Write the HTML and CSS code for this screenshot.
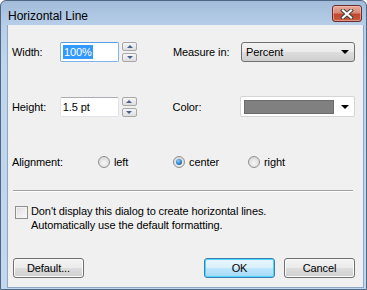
FILE: index.html
```html
<!DOCTYPE html>
<html>
<head>
<meta charset="utf-8">
<link rel="stylesheet" href="styles.css">
</head>
<body>
<div class="window">
  <div class="titlebar">
    <span class="title">Horizontal Line</span>
    <div class="close">
      <svg width="14" height="10" viewBox="0 0 14 10">
        <path d="M3 1.5 L11 8.5 M11 1.5 L3 8.5" stroke="#3a3a3a" stroke-width="4" stroke-linecap="square" fill="none"/>
        <path d="M3 1.5 L11 8.5 M11 1.5 L3 8.5" stroke="#ffffff" stroke-width="2.2" stroke-linecap="square" fill="none"/>
      </svg>
    </div>
  </div>
  <div class="client">
    <div class="row row1">
      <span class="lbl">Width:</span>
      <div class="textbox focused"><span class="sel">100%</span></div>
      <div class="spin">
        <div class="spinbtn"><span class="tri up"></span></div>
        <div class="spinbtn"><span class="tri down"></span></div>
      </div>
      <span class="lbl2">Measure in:</span>
      <div class="select"><span>Percent</span><span class="arrow"></span></div>
    </div>
    <div class="row row2">
      <span class="lbl">Height:</span>
      <div class="textbox"><span>1.5 pt</span></div>
      <div class="spin">
        <div class="spinbtn"><span class="tri up"></span></div>
        <div class="spinbtn"><span class="tri down"></span></div>
      </div>
      <span class="lbl2">Color:</span>
      <div class="colorbox"><span class="swatch"></span><span class="arrow"></span></div>
    </div>
    <div class="row row3">
      <span class="lbl wide">Alignment:</span>
      <div class="radiogrp"><span class="radio"></span><span>left</span></div>
      <div class="radiogrp"><span class="radio checked"></span><span>center</span></div>
      <div class="radiogrp"><span class="radio"></span><span>right</span></div>
    </div>
    <div class="separator"></div>
    <div class="checkrow">
      <span class="checkbox"></span>
      <span class="checktext">Don't display this dialog to create horizontal lines.<br>Automatically use the default formatting.</span>
    </div>
    <div class="buttons">
      <div class="btn">Default...</div>
      <div class="btn default push">OK</div>
      <div class="btn">Cancel</div>
    </div>
  </div>
</div>
</body>
</html>
```

FILE: styles.css
```css
html, body {
  margin: 0;
  padding: 0;
}
body {
  width: 367px;
  height: 290px;
  overflow: hidden;
  font-family: "Liberation Sans", Arial, sans-serif;
  font-size: 11px;
  letter-spacing: -0.1px;
  color: #000;
  background: #fff;
}
.window {
  box-sizing: border-box;
  width: 367px;
  height: 290px;
  border: 1px solid #4f6684;
  border-radius: 6px 6px 0 0;
  background: linear-gradient(to bottom, #a2bcd9 0px, #b6cee8 24px, #bfd5ec 60px, #c3d8ee 100%);
  display: flex;
  flex-direction: column;
}
.titlebar {
  height: 24px;
  display: flex;
  align-items: flex-start;
  padding: 0 4px 0 7px;
}
.title {
  font-size: 12px;
  letter-spacing: 0;
  line-height: 12px;
  margin-top: 9px;
  color: #000;
}
.close {
  margin-left: auto;
  margin-top: 4px;
  box-sizing: border-box;
  width: 30px;
  height: 17px;
  border: 1px solid #6b2b2b;
  border-radius: 3px;
  background: linear-gradient(to bottom, #e8a899 0%, #d98a78 45%, #c2472f 55%, #c85c40 100%);
  box-shadow: inset 0 0 0 1px rgba(255, 210, 200, 0.5);
  display: flex;
  align-items: center;
  justify-content: center;
}
.client {
  flex: 1;
  margin: 0 2px 1px 6px;
  border: 1px solid #8da7c5;
  border-top: none;
  background: #f0f0f0;
  padding: 16px 8px 0 4px;
}
.row {
  display: flex;
  align-items: center;
  height: 21px;
}
.row2 {
  margin-top: 34px;
}
.row3 {
  margin-top: 35px;
  height: 20px;
}
.lbl {
  width: 48px;
}
.lbl.wide {
  width: 86px;
}
.lbl2 {
  width: 68px;
  margin-left: 36px;
}
.textbox {
  box-sizing: border-box;
  width: 59px;
  height: 20px;
  background: #fff;
  border: 1px solid #e2e3ea;
  border-top-color: #abadb3;
  border-radius: 2px;
  display: flex;
  align-items: center;
  padding-left: 2px;
}
.textbox.focused {
  border-color: #7eb4ea;
  border-top-color: #569de5;
}
.sel {
  background: #3399ff;
  color: #fff;
  line-height: 14px;
  padding: 0 1px;
}
.spin {
  margin-left: 3px;
  width: 15px;
  display: flex;
  flex-direction: column;
  gap: 2px;
}
.spinbtn {
  box-sizing: border-box;
  height: 9px;
  border: 1px solid #a8a8a8;
  border-radius: 2px;
  background: linear-gradient(to bottom, #f6f6f6, #dedede);
  display: flex;
  align-items: center;
  justify-content: center;
}
.tri {
  width: 0;
  height: 0;
  border-left: 3px solid transparent;
  border-right: 3px solid transparent;
}
.tri.up {
  border-bottom: 3px solid #4b5f8e;
}
.tri.down {
  border-top: 3px solid #4b5f8e;
}
.select {
  box-sizing: border-box;
  width: 114px;
  height: 20px;
  border: 1px solid #707070;
  border-radius: 3px;
  background: linear-gradient(to bottom, #f2f2f2 0%, #ebebeb 50%, #dddddd 51%, #cfcfcf 100%);
  display: flex;
  align-items: center;
  padding-left: 4px;
  padding-right: 5px;
  margin-top: 1px;
}
.arrow {
  margin-left: auto;
  width: 0;
  height: 0;
  border-left: 4px solid transparent;
  border-right: 4px solid transparent;
  border-top: 4px solid #000;
}
.colorbox {
  box-sizing: border-box;
  width: 115px;
  height: 21px;
  border: 1px solid #d5d5d5;
  border-radius: 2px;
  background: #fff;
  display: flex;
  align-items: center;
  padding-left: 3px;
  padding-right: 5px;
}
.swatch {
  box-sizing: border-box;
  width: 90px;
  height: 14px;
  background: #808080;
  border: 1px solid #6c6c6c;
}
.radiogrp {
  width: 75px;
  display: flex;
  align-items: center;
  gap: 4px;
}
.radio {
  box-sizing: border-box;
  width: 12px;
  height: 12px;
  border-radius: 50%;
  border: 1px solid #8e8f8f;
  background: radial-gradient(circle at 50% 60%, #f6f6f6 0%, #e2e2e2 55%, #cfcfcf 100%);
  position: relative;
}
.radio.checked::after {
  content: "";
  position: absolute;
  left: 2px;
  top: 2px;
  width: 6px;
  height: 6px;
  border-radius: 50%;
  background: radial-gradient(circle at 40% 35%, #8fd0f5 0%, #2f86cf 50%, #15508f 100%);
}
.separator {
  margin-top: 18px;
  margin-left: 1px;
  width: 340px;
  height: 1px;
  background: #a0a0a0;
  border-bottom: 1px solid #ffffff;
}
.checkrow {
  margin-top: 12px;
  padding-left: 3px;
  display: flex;
  align-items: flex-start;
  gap: 3px;
}
.checkbox {
  flex: none;
  box-sizing: border-box;
  width: 13px;
  height: 13px;
  margin-top: 2px;
  border: 1px solid #8e8f8f;
  background: linear-gradient(135deg, #dcdcdc, #fbfbfb);
  box-shadow: inset 0 0 0 1px #f4f4f4;
}
.checktext {
  line-height: 14px;
}
.buttons {
  margin-top: 26px;
  padding-left: 1px;
  display: flex;
  gap: 9px;
}
.btn {
  box-sizing: border-box;
  width: 71px;
  height: 20px;
  border: 1px solid #707070;
  border-radius: 3px;
  background: linear-gradient(to bottom, #f2f2f2 0%, #ebebeb 50%, #dddddd 51%, #cfcfcf 100%);
  box-shadow: inset 0 0 0 1px #fcfcfc;
  display: flex;
  align-items: center;
  justify-content: center;
}
.btn.default {
  border-color: #3c7fb1;
  background: linear-gradient(to bottom, #eaf6fd 0%, #d9f0fc 50%, #bee6fd 51%, #a7d9f5 100%);
  box-shadow: inset 0 0 0 1px #48d8fb;
}
.push {
  margin-left: auto;
}
```
